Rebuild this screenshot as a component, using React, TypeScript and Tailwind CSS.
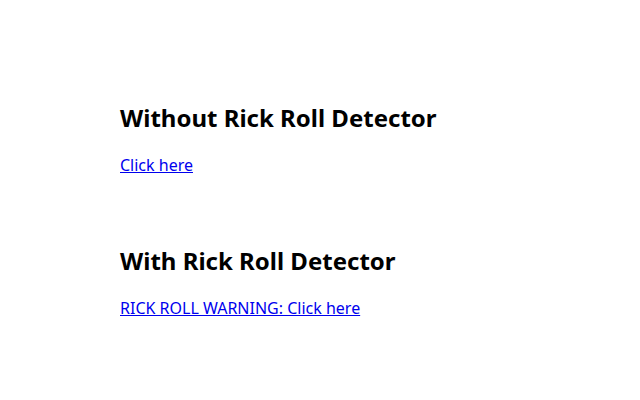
export default function App() {
  return (
    <div className="min-h-[400px] bg-white pl-[120px] pt-[102px] font-['Noto_Sans',sans-serif] text-black">
      <section className="flex flex-col items-start gap-[19px]">
        <h2 className="text-2xl leading-8 font-bold">Without Rick Roll Detector</h2>
        <a href="#" className="text-base leading-6 text-[#0000ee] underline">Click here</a>
      </section>
      <section className="mt-[68px] flex flex-col items-start gap-[19px]">
        <h2 className="text-2xl leading-8 font-bold">With Rick Roll Detector</h2>
        <a href="#" className="text-base leading-6 text-[#0000ee] underline">RICK ROLL WARNING: Click here</a>
      </section>
    </div>
  );
}
